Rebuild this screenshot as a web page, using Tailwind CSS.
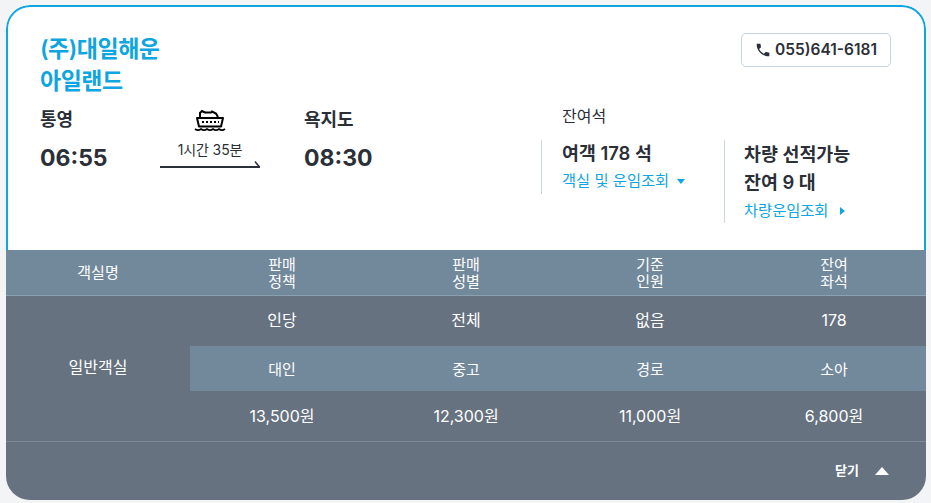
<!DOCTYPE html>
<html lang="ko">
<head>
    <meta charset="UTF-8">
    <meta name="viewport" content="width=device-width, initial-scale=1.0">
    <title>대일해운 아일랜드</title>
    <script src="https://cdn.jsdelivr.net/npm/@tailwindcss/browser@4"></script>
</head>
<body class="bg-[#f3f4f6] font-['Inter','Noto_Sans_CJK_KR',sans-serif] text-[#2b2f38] overflow-hidden">
    <div class="w-[920px] h-[495px] ml-[6px] mt-[5px] rounded-[24px] overflow-hidden flex flex-col">

        <!-- 운항 정보 -->
        <div class="h-[245px] bg-white border-2 border-b-0 border-[#0ea5e0] rounded-t-[24px] pl-[32px] pr-[33px] pt-[26px] relative">
            <div class="flex justify-between items-start">
                <h2 class="text-[23px] leading-[32px] font-semibold text-[#0ea5e0] tracking-[-0.5px]">(주)대일해운<br>아일랜드</h2>
                <a href="#" class="h-[34px] w-[150px] border border-[#c5d2e6] rounded-[5px] flex items-center justify-center gap-[4px] text-[15.500px] font-semibold">
                    <svg class="w-[16px] h-[16px]" viewBox="0 0 24 24" fill="#2b2f38"><path d="M6.2 10.600c1.500 3 4.100 5.500 7.100 7.100l2.400-2.400c.3-.3.7-.4 1.100-.2 1.200.4 2.400.6 3.700.6.600 0 1 .4 1 1V20.500c0 .6-.4 1-1 1C10.600 21.500 2.500 13.400 2.500 3.500c0-.6.4-1 1-1h3.900c.6 0 1 .4 1 1 0 1.300.2 2.500.6 3.700.1.400 0 .8-.3 1.100z"/></svg>
                    055)641-6181
                </a>
            </div>

            <div class="flex mt-[10px]">
                <div class="w-[120px]">
                    <p class="text-[18px] leading-[26px] font-semibold">통영</p>
                    <p class="text-[23px] leading-[32px] font-bold mt-[9px]">06:55</p>
                </div>
                <div class="w-[100px] mr-[44px] flex flex-col items-center">
                    <svg class="w-[32px] h-[24px] mt-[1px]" viewBox="0 0 32 24" fill="none" stroke="#000" stroke-width="2">
                        <path d="M6 9V5l2-2 3 1.500h6l1-1 4 2 2 3.500"/>
                        <path d="M3 10h26l-2 8.500H5z" stroke-linejoin="round"/>
                        <path d="M8 14h2M12 14h2M16 14h2M20 14h2M24 14h1"/>
                        <path d="M1 21c2 1.500 4 1.500 6 0 2 1.500 4 1.500 6 0 2 1.500 4 1.500 6 0 2 1.500 4 1.500 6 0 2 1.500 4 1.500 6 0" stroke-width="1.600"/>
                    </svg>
                    <p class="text-[14px] leading-[20px] mt-[8px] tracking-[-0.1px]">1시간 35분</p>
                    <svg class="w-[100px] h-[8px]" viewBox="0 0 100 8" fill="none" stroke="#2b2f38"><path d="M0 7H100" stroke-width="2"/><path d="M95 1.500l4 5" stroke-width="1.500"/></svg>
                </div>
                <div class="w-[237px]">
                    <p class="text-[18px] leading-[26px] font-semibold">욕지도</p>
                    <p class="text-[23px] leading-[32px] font-bold mt-[9px]">08:30</p>
                </div>
                <div>
                    <p class="text-[16px] leading-[20px] pl-[21px] mt-[-1px]">잔여석</p>
                    <div class="flex mt-[14px] items-start">
                        <div class="w-[183px] h-[54px] border-l border-[#ccd5e1] pl-[20px]">
                            <p class="text-[18.400px] leading-[26px] font-semibold">여객 178 석</p>
                            <a href="#" class="flex items-center text-[15.300px] leading-[22px] text-[#0ea5e0] mt-[4px]">객실 및 운임조회
                                <svg class="w-[8px] h-[5px] ml-[8px]" viewBox="0 0 8 5" fill="#0ea5e0"><path d="M0 0h8L4 5z"/></svg>
                            </a>
                        </div>
                        <div class="h-[83px] border-l border-[#ccd5e1] pl-[19px]">
                            <p class="text-[18.400px] leading-[28px] font-semibold">차량 선적가능</p>
                            <p class="text-[18.400px] leading-[28px] font-semibold">잔여 9 대</p>
                            <a href="#" class="flex items-center text-[15.300px] leading-[22px] text-[#0ea5e0] mt-[4px]">차량운임조회
                                <svg class="w-[5px] h-[8px] ml-[12px]" viewBox="0 0 5 8" fill="#0ea5e0"><path d="M0 0v8l5-4z"/></svg>
                            </a>
                        </div>
                    </div>
                </div>
            </div>
        </div>

        <!-- 객실 표 -->
        <div class="flex-1 bg-[#66727f] text-white text-[15px] flex flex-col">
            <div class="h-[46px] bg-[#72899c] border-b border-[#8ca0b0] grid grid-cols-5 items-center text-center leading-[17px]">
                <div>객실명</div>
                <div>판매<br>정책</div>
                <div>판매<br>성별</div>
                <div>기준<br>인원</div>
                <div>잔여<br>좌석</div>
            </div>
            <div class="grid grid-cols-5 border-b border-[#7d8995] text-center">
                <div class="flex items-center justify-center text-[16px] pb-[3px]">일반객실</div>
                <div class="col-span-4 flex flex-col">
                    <div class="h-[50px] grid grid-cols-4 items-center text-[16px] pb-[3px]"><div>인당</div><div>전체</div><div>없음</div><div>178</div></div>
                    <div class="h-[45px] bg-[#72899c] grid grid-cols-4 items-center pt-[3px]"><div>대인</div><div>중고</div><div>경로</div><div>소아</div></div>
                    <div class="h-[50px] grid grid-cols-4 items-center text-[16px]"><div>13,500원</div><div>12,300원</div><div>11,000원</div><div>6,800원</div></div>
                </div>
            </div>
            <a href="#" class="flex-1 flex items-center justify-end pr-[37px] text-[13px] font-semibold">닫기
                <svg class="w-[14px] h-[8px] ml-[16px]" viewBox="0 0 14 8" fill="#fff"><path d="M0 8L7 0l7 8z"/></svg>
            </a>
        </div>
    </div>
</body>
</html>
